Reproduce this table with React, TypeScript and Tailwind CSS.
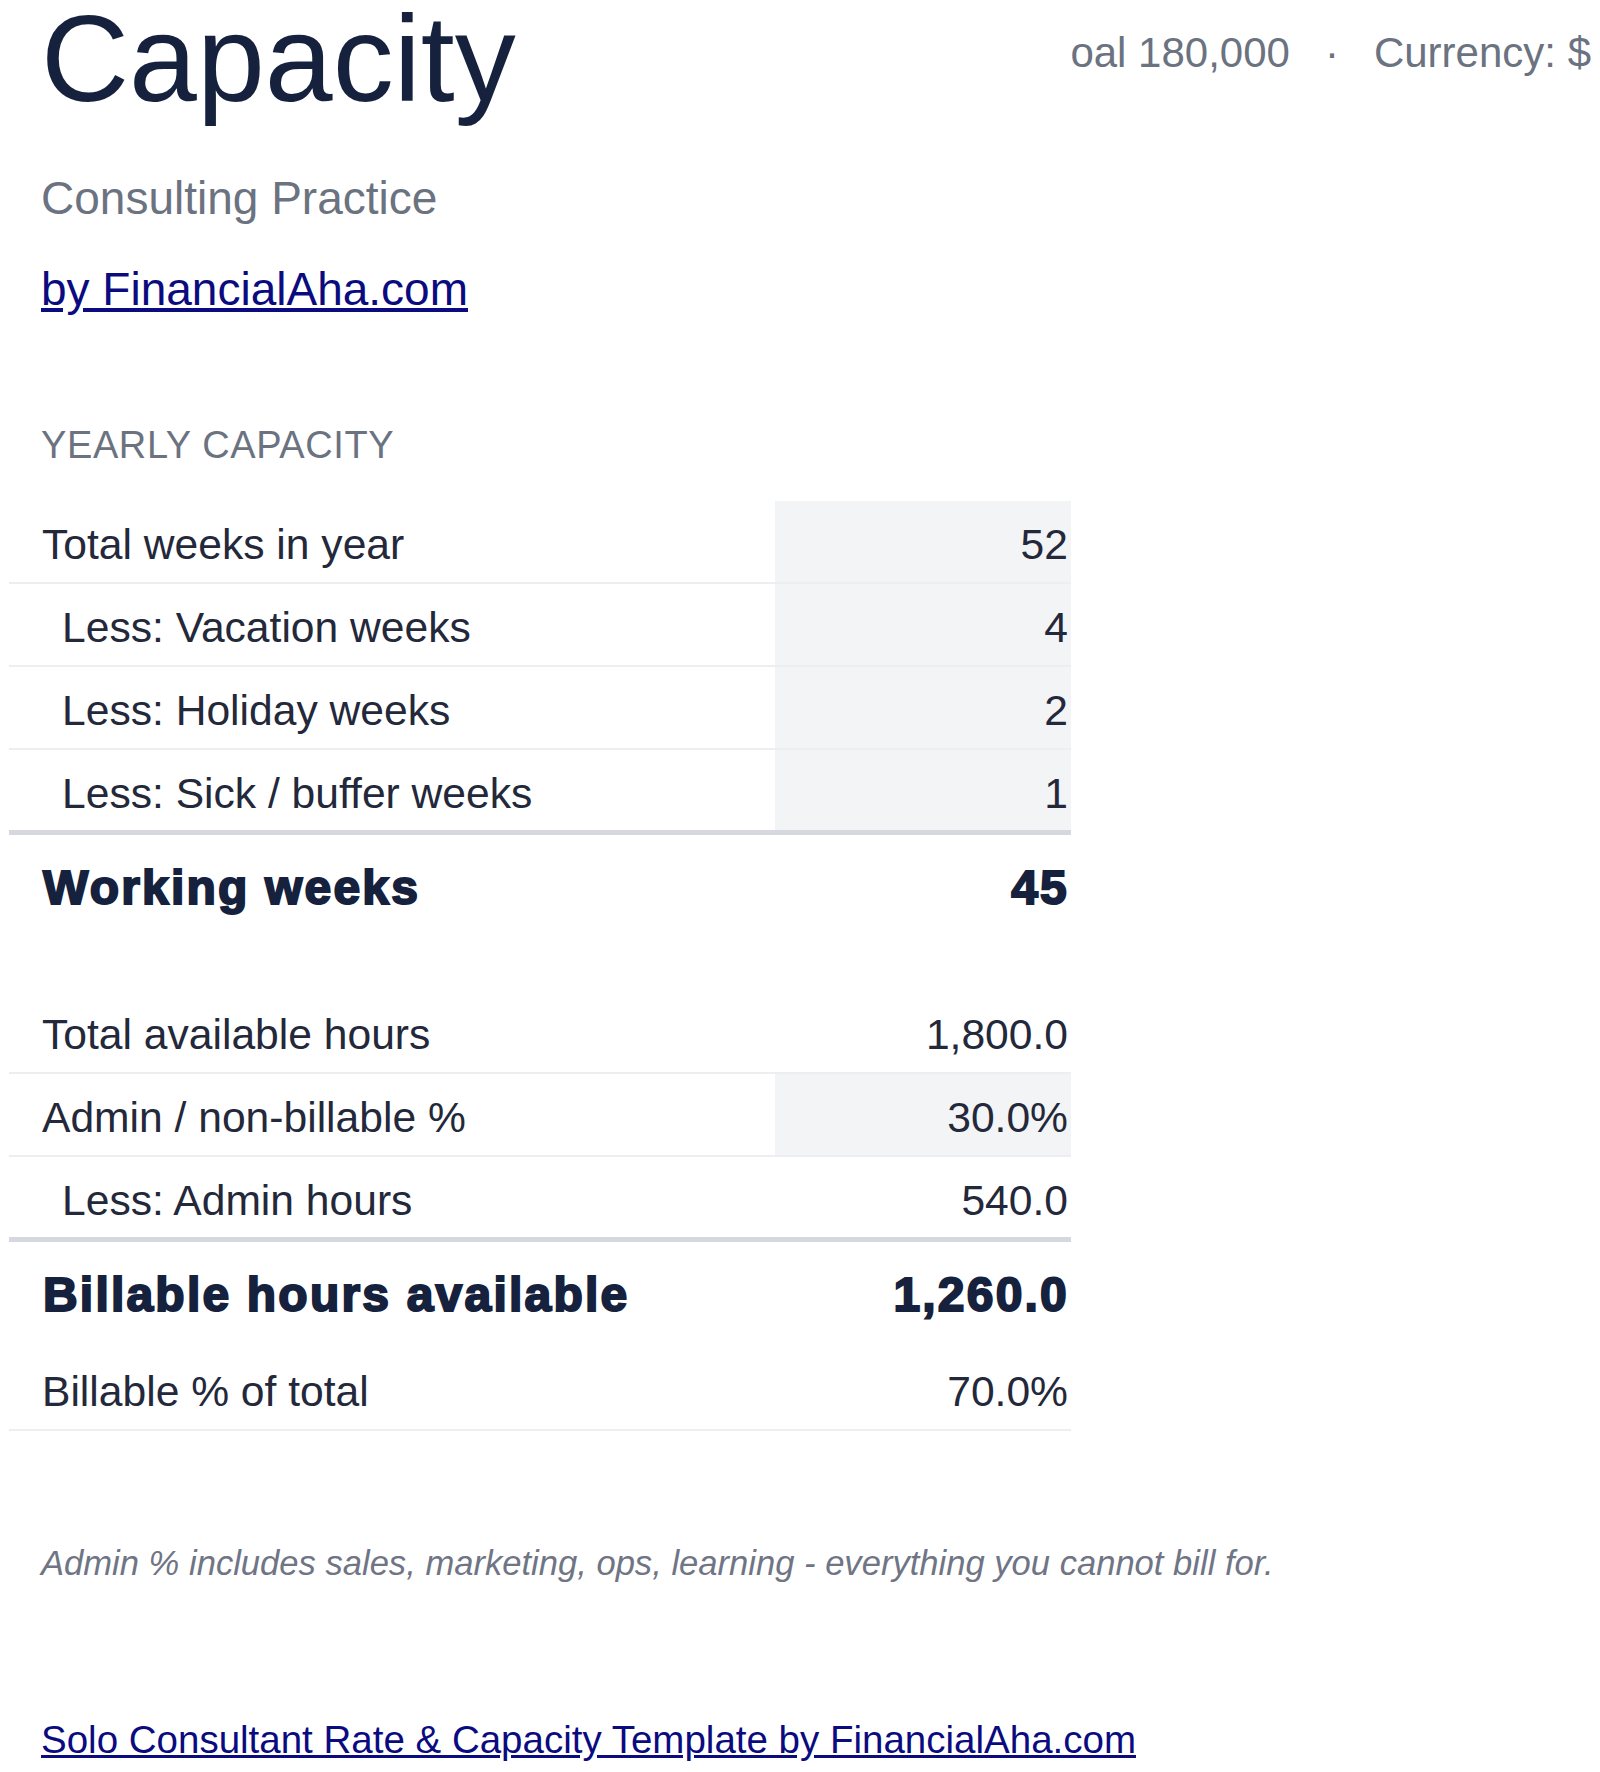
type Row = {
  label: string;
  value: string;
  indent?: boolean;
  input?: boolean;
  kind?: "normal" | "thick" | "total";
};

const weeks: Row[] = [
  { label: "Total weeks in year", value: "52", input: true },
  { label: "Less: Vacation weeks", value: "4", indent: true, input: true },
  { label: "Less: Holiday weeks", value: "2", indent: true, input: true },
  { label: "Less: Sick / buffer weeks", value: "1", indent: true, input: true, kind: "thick" },
  { label: "Working weeks", value: "45", kind: "total" },
];

const hours: Row[] = [
  { label: "Total available hours", value: "1,800.0" },
  { label: "Admin / non-billable %", value: "30.0%", input: true },
  { label: "Less: Admin hours", value: "540.0", indent: true, kind: "thick" },
  { label: "Billable hours available", value: "1,260.0", kind: "total" },
  { label: "Billable % of total", value: "70.0%" },
];

function TableRow({ row }: { row: Row }) {
  if (row.kind === "total") {
    return (
      <div className="grid grid-cols-[766px_296px] text-[48px] font-bold leading-[60px] tracking-[2.2px] text-[#16223d] [-webkit-text-stroke:2px_#16223d]">
        <div className="pl-[34px] pt-[23px] pb-[23px]">{row.label}</div>
        <div className="pr-[2px] pt-[23px] pb-[23px] text-right">{row.value}</div>
      </div>
    );
  }
  const border =
    row.kind === "thick" ? "border-b-[5px] border-[#d5d9df]" : "border-b-2 border-[#eceef1]";
  const pb = row.kind === "thick" ? "pb-[13px]" : "pb-[14px]";
  return (
    <div className={`grid grid-cols-[766px_296px] text-[42.6px] leading-[48px] text-[#23283a] ${border}`}>
      <div className={`pt-[19px] ${pb} ${row.indent ? "pl-[53px]" : "pl-[33px]"}`}>{row.label}</div>
      <div className={`pt-[19px] ${pb} pr-[3px] text-right ${row.input ? "bg-[#f3f4f6]" : ""}`}>
        {row.value}
      </div>
    </div>
  );
}

export default function App() {
  return (
    <div className="min-h-[1772px] bg-white px-[9px] font-['Liberation_Sans',Arial,sans-serif]">
      <div className="flex items-start justify-between">
        <h1 className="ml-[32px] text-[122px] font-normal leading-[118px] text-[#16223d]">Capacity</h1>
        <div className="mt-[29px] flex whitespace-nowrap text-[42px] leading-[48px] text-[#6b7280]">
          <span>oal 180,000</span>
          <span className="mx-[35px]">·</span>
          <span>Currency: $</span>
        </div>
      </div>

      <div className="pl-[32px]">
        <p className="mt-[52px] text-[46px] leading-[56px] text-[#6b7280]">Consulting Practice</p>
        <a href="#" className="mt-[35px] block w-fit text-[46px] leading-[56px] text-[#0b0b80] underline">
          by FinancialAha.com
        </a>
        <h2 className="mt-[105px] text-[38px] leading-[46px] tracking-[0.6px] text-[#6b7280]">YEARLY CAPACITY</h2>
      </div>

      <div className="mt-[33px] w-[1062px]">
        {weeks.map((r) => (
          <TableRow key={r.label} row={r} />
        ))}
      </div>

      <div className="mt-[50px] w-[1062px]">
        {hours.map((r) => (
          <TableRow key={r.label} row={r} />
        ))}
      </div>

      <div className="pl-[32px]">
        <p className="mt-[112px] text-[34.6px] italic leading-[40px] text-[#6f7585]">
          Admin % includes sales, marketing, ops, learning - everything you cannot bill for.
        </p>
        <a href="#" className="mt-[134px] block w-fit text-[38.5px] leading-[46px] text-[#0b0b80] underline">
          Solo Consultant Rate &amp; Capacity Template by FinancialAha.com
        </a>
      </div>
    </div>
  );
}
